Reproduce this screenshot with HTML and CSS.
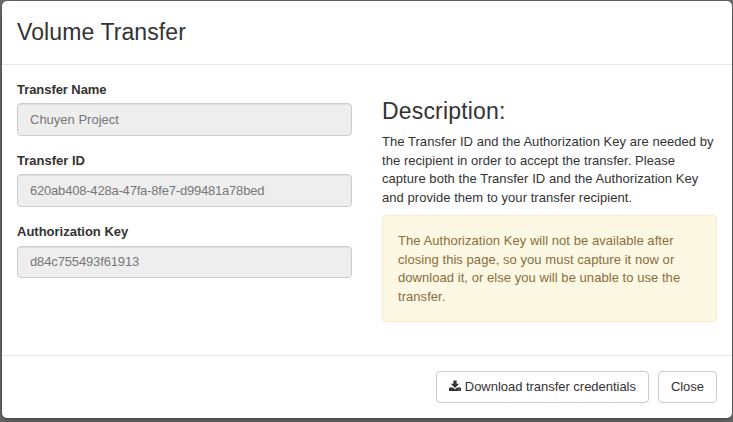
FILE: index.html
```html
<!DOCTYPE html>
<html lang="en">
<head>
<meta charset="utf-8">
<title>Volume Transfer</title>
<link rel="stylesheet" href="styles.css">
</head>
<body>
<div class="modal">
  <header class="modal-header"><h3 class="modal-title">Volume Transfer</h3></header>
  <div class="modal-body">
    <form class="column">
      <div class="form-group">
        <label for="name">Transfer Name</label>
        <input id="name" class="form-control" type="text" value="Chuyen Project" readonly>
      </div>
      <div class="form-group">
        <label for="tid">Transfer ID</label>
        <input id="tid" class="form-control transfer-id" type="text" value="620ab408-428a-47fa-8fe7-d99481a78bed" readonly>
      </div>
      <div class="form-group">
        <label for="key">Authorization Key</label>
        <input id="key" class="form-control auth-key" type="text" value="d84c755493f61913" readonly>
      </div>
    </form>
    <section class="column">
      <h3 class="description-title">Description:</h3>
      <p class="description">The Transfer ID and the Authorization Key are needed by the recipient in order to accept the transfer. Please capture both the Transfer ID and the Authorization Key and provide them to your transfer recipient.</p>
      <p class="alert">The Authorization Key will not be available after closing this page, so you must capture it now or download it, or else you will be unable to use the transfer.</p>
    </section>
  </div>
  <footer class="modal-footer">
    <button class="btn" type="button"><svg class="icon" viewBox="0 0 12 12" aria-hidden="true"><path d="M4.4 0.4h3.2v3.4h2.6L6 8 1.8 3.8h2.6z"/><path fill-rule="evenodd" d="M.5 7.4h3.3L6 9.3l2.2-1.9h3.3q.5 0 .5.5v2.7q0 .5-.5.5H.5q-.5 0-.5-.5V7.9q0-.5.5-.5zM9.6 9.5v.7h.9v-.7z"/></svg>Download transfer credentials</button>
    <button class="btn" type="button">Close</button>
  </footer>
</div>
</body>
</html>
```
FILE: styles.css
```css
* {
  box-sizing: border-box;
}

body {
  margin: 0;
  height: 422px;
  padding: 0 0 0 1px;
  overflow: hidden;
  background: #737172;
  color: #333;
  font: 13px/1.428571 "Liberation Sans", Arial, sans-serif;
}

.modal {
  width: 732px;
  border: 1px solid rgba(0, 0, 0, 0.1);
  border-radius: 6px;
  background: #fff;
  background-clip: padding-box;
  box-shadow: 0 5px 15px rgba(0, 0, 0, 0.35);
}

.modal-header {
  padding: 15px;
  border-bottom: 1px solid #e5e5e5;
}

.modal-title,
.description-title {
  margin: 0;
  font-size: 23px;
  font-weight: 400;
  letter-spacing: 0.1px;
}

.modal-title {
  line-height: 32.86px;
}

.modal-body {
  display: flex;
  gap: 30px;
  padding: 15px;
}

.column {
  flex: 1 1 0;
  min-width: 0;
}

.form-group {
  margin-bottom: 15px;
}

label {
  display: block;
  margin-bottom: 3.9px;
  padding-top: 0.7px;
  font-weight: 700;
}

.form-group:first-child label {
  letter-spacing: -0.06px;
}

.form-control {
  display: block;
  width: 100%;
  height: 32.57px;
  padding: 6px 12px;
  border: 1px solid #ccc;
  border-radius: 4px;
  background: #eee;
  color: #777;
  font: inherit;
  box-shadow: inset 0 1px 1px rgba(0, 0, 0, 0.075);
}

.form-group + .form-group {
  margin-top: 15.6px;
}

.transfer-id {
  letter-spacing: -0.2px;
}

.auth-key {
  height: 32px;
  letter-spacing: -0.14px;
}

.description-title {
  margin: 18.7px 0 9.3px;
  line-height: 1.1;
  letter-spacing: 0.17px;
}

.description {
  margin: 0 0 8px;
  letter-spacing: 0.05px;
}

.alert {
  margin: 0 0 18px;
  padding: 15.8px 15px 14.2px;
  border: 1px solid #faebcc;
  border-radius: 4px;
  background: #fcf8e3;
  color: #8a6d3b;
  letter-spacing: 0.05px;
}

.modal-footer {
  display: flex;
  justify-content: flex-end;
  gap: 9px;
  padding: 15px;
  border-top: 1px solid #e5e5e5;
}

.btn {
  padding: 6px 12px;
  border: 1px solid #ccc;
  border-radius: 4px;
  background: #fff;
  color: #333;
  font: inherit;
  letter-spacing: -0.03px;
  white-space: nowrap;
}

.icon {
  width: 12px;
  height: 12px;
  margin-right: 4px;
  vertical-align: -1px;
  fill: currentColor;
}
```
